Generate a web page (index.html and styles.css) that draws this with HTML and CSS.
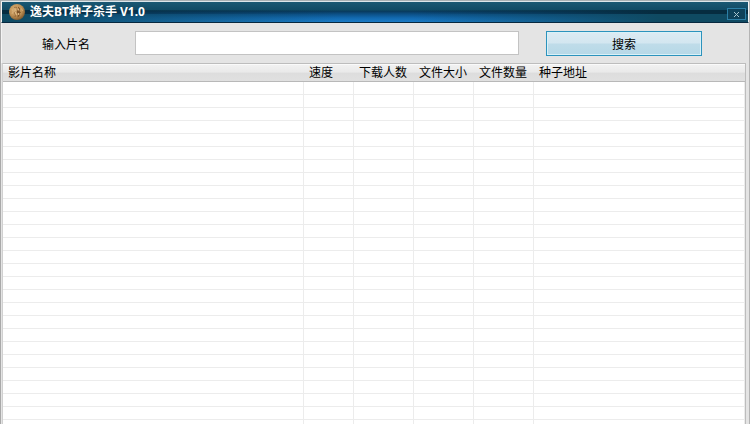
FILE: index.html
```html
<!DOCTYPE html>
<html lang="zh-CN">
<head>
  <meta charset="UTF-8" />
  <meta name="viewport" content="width=device-width, initial-scale=1.0"/>
  <title>逸夫BT种子杀手 V1.0</title>
  <link rel="stylesheet" href="styles.css">
</head>
<body>

<div class="window">
  <header class="titlebar">
    <svg class="logo" viewBox="0 0 16 16" aria-hidden="true">
      <defs>
        <radialGradient id="coin" cx="0.4" cy="0.35" r="0.7">
          <stop offset="0" stop-color="#d9b176"/>
          <stop offset="0.6" stop-color="#bd8f54"/>
          <stop offset="1" stop-color="#7a5429"/>
        </radialGradient>
      </defs>
      <circle cx="8" cy="8" r="8" fill="url(#coin)"/>
      <path d="M9 2.5L11 4.5L10.5 7L12 8.5L10.5 9.5L10.5 12L8.5 13.5L8.8 10L7.5 8L8.8 5.5Z" fill="#7b5229"/>
      <path d="M5 3.5L7.5 3L7 6L5.5 9L7 12.5L4.5 12" fill="none" stroke="#94683a" stroke-width="0.8"/>
      <path d="M7 4.5L6 7.5L7.5 11M9.5 4.5L9.5 6.5M9.5 9L9.5 11" fill="none" stroke="#e3c08b" stroke-width="0.9"/>
      <path d="M3 5L4 7.5L3 10M12.5 4.5L13.5 7" fill="none" stroke="#d9b37d" stroke-width="0.8"/>
    </svg>
    <h1>逸夫BT种子杀手 V1.0</h1>
    <button type="button" class="close" aria-label="关闭">
      <svg viewBox="0 0 7 7" aria-hidden="true">
        <path d="M1 1L6 6M6 1L1 6" stroke="#a5c3cd" stroke-width="1"/>
      </svg>
    </button>
  </header>

  <form class="search" onsubmit="return false">
    <label for="keyword">输入片名</label>
    <input type="text" id="keyword">
    <button type="submit">搜索</button>
  </form>

  <div class="list">
    <table>
      <colgroup>
        <col class="col-name">
        <col class="col-speed">
        <col class="col-num">
        <col class="col-num">
        <col class="col-num">
        <col>
      </colgroup>
      <thead>
        <tr>
          <th>影片名称</th>
          <th>速度</th>
          <th>下载人数</th>
          <th>文件大小</th>
          <th>文件数量</th>
          <th>种子地址</th>
        </tr>
      </thead>
      <tbody id="results"></tbody>
    </table>
  </div>
</div>

<script>
  const ROW_HEIGHT = 13;

  // Fill the visible part of the list with empty grid rows
  function fillRows() {
    const list = document.querySelector(".list");
    const count = Math.ceil(list.clientHeight / ROW_HEIGHT);
    const row = "<tr>" + "<td></td>".repeat(6) + "</tr>";
    document.getElementById("results").innerHTML = row.repeat(count);
  }

  window.onresize = fillRows;
  fillRows();
</script>

</body>
</html>
```

FILE: styles.css
```css
* {
  box-sizing: border-box;
}

body {
  margin: 0;
  background-color: #e4e4e4;
  color: #000000;
  font-family: "Liberation Sans", "Noto Sans CJK SC", sans-serif;
  font-size: 12px;
}

.window {
  display: flex;
  flex-direction: column;
  height: 100vh;
  overflow: hidden;
  border-top: 1px solid #a9b0b3;
  border-left: 1px solid #a9a9a9;
  border-right: 1px solid #b4b4b4;
}

.titlebar {
  display: flex;
  align-items: center;
  height: 22px;
  padding: 0 2px 0 7px;
  border-top: 1px solid #dce6ea;
  border-left: 1px solid #f4f4f4;
  border-right: 1px solid #f4f4f4;
  border-bottom: 1px solid #06283f;
  background:
    linear-gradient(to right, #0f4a62 0, rgba(15, 74, 98, 0) 45%, rgba(15, 74, 98, 0) 55%, #0f4a62 88%) bottom / 100% 8px no-repeat,
    linear-gradient(to right, #062c40 0, rgba(6, 44, 64, 0) 45%, rgba(6, 44, 64, 0) 55%, #062c40 88%) 0 8px / 100% 4px no-repeat,
    linear-gradient(#1a5873 0, #104a64 40%, #083a5c 46%, #0c4f85 60%, #1269b0 80%, #1b7bc6 100%);
}

.logo {
  width: 16px;
  height: 16px;
  margin-right: 5px;
}

.titlebar h1 {
  flex: 1;
  margin: 0;
  color: #ffffff;
  font-family: "Noto Sans", "Noto Sans CJK SC", sans-serif;
  font-size: 12px;
  line-height: 18px;
}

.close {
  display: flex;
  align-items: center;
  justify-content: center;
  width: 19px;
  height: 12px;
  margin-top: 4px;
  padding: 0;
  border: 1px solid #2c7fa6;
  background-color: #0d4159;
}

.close svg {
  width: 7px;
  height: 7px;
}

.search {
  display: flex;
  align-items: center;
  height: 40px;
  padding: 0 47px 0 40px;
  border-left: 1px solid #f4f4f4;
}

.search label {
  width: 93px;
}

.search input {
  flex: 1;
  min-width: 0;
  height: 24px;
  padding: 2px 4px;
  border: 1px solid #c3c3c3;
  background-color: #ffffff;
  font: inherit;
}

.search button {
  width: 156px;
  height: 25px;
  margin-left: 27px;
  padding: 0;
  border: 1px solid #2c93bd;
  background: linear-gradient(#dcebf3 0, #d3e6f0 48%, #bfdce9 52%, #b6d8e7 100%);
  box-shadow: inset 0 0 0 1px #d9f1f8;
  color: #000000;
  font: inherit;
}

.list {
  flex: 1;
  min-height: 0;
  margin: 0 3px 0 1px;
  overflow: hidden;
  border-top: 1px solid #bdbdbd;
  border-left: 1px solid #d0d0d0;
  border-right: 1px solid #bdbdbd;
  background-color: #ffffff;
}

table {
  width: 100%;
  table-layout: fixed;
  border-collapse: separate;
  border-spacing: 0;
}

.col-name {
  width: 301px;
}

.col-speed {
  width: 50px;
}

.col-num {
  width: 60px;
}

th {
  height: 18px;
  padding: 0 0 0 5px;
  border-top: 1px solid #fafafa;
  border-bottom: 1px solid #b8b8b8;
  background: linear-gradient(#f1f1f1 0, #e9e9e9 45%, #dddddd 50%, #e0e0e0 100%);
  font-weight: normal;
  line-height: 16px;
  text-align: left;
  white-space: nowrap;
}

td {
  height: 13px;
  padding: 0;
  border-right: 1px solid #ececec;
  border-bottom: 1px solid #ececec;
}
```
